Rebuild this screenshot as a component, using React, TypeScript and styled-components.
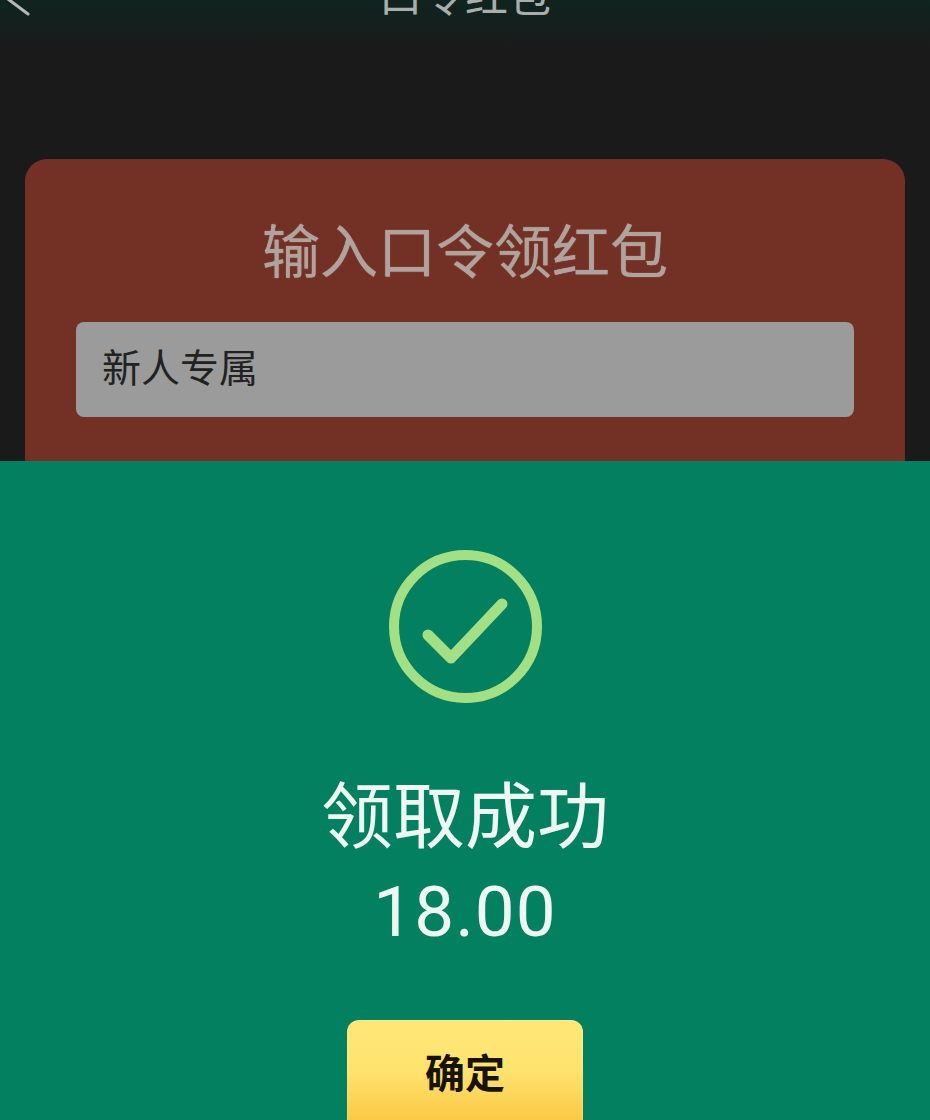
import React from 'react';
import styled, { createGlobalStyle } from 'styled-components';

const GlobalStyle = createGlobalStyle`
  html, body {
    margin: 0;
    padding: 0;
    background: #1a1a1a;
  }
  * {
    box-sizing: border-box;
  }
`;

const cjk = `"Noto Sans CJK SC", "Noto Sans", sans-serif`;

const Screen = styled.div`
  width: 930px;
  height: 1120px;
  overflow: hidden;
  display: flex;
  flex-direction: column;
  font-family: ${cjk};
`;

const Backdrop = styled.div`
  height: 461px;
  flex: none;
  overflow: hidden;
  background: #1a1a1a;
`;

const Header = styled.header`
  height: 100px;
  margin-top: -50px;
  padding-bottom: 14px;
  display: flex;
  align-items: center;
  justify-content: center;
  position: relative;
  background: linear-gradient(#0f2420 0%, #10231f 55%, #1a1a1a 100%);
`;

const BackIcon = styled.svg`
  position: absolute;
  left: 0;
  top: 50px;
  width: 40px;
  height: 40px;
`;

const HeaderTitle = styled.h1`
  margin: 0;
  font-size: 43px;
  line-height: 60px;
  font-weight: 400;
  color: #a9aeac;
`;

const Card = styled.section`
  margin: 109px 25px 0;
  height: 420px;
  padding: 56px 51px 0;
  border-radius: 22px;
  background: #733125;
`;

const CardTitle = styled.h2`
  margin: 0 0 41px;
  height: 66px;
  font-size: 58px;
  line-height: 66px;
  font-weight: 400;
  text-align: center;
  color: #b0a29d;
  text-shadow: 0 0 1px #b0a29d;
`;

const CodeField = styled.div`
  height: 95px;
  padding: 0 26px 10px;
  display: flex;
  align-items: center;
  border-radius: 8px;
  background: #9b9b9b;
  font-size: 39px;
  color: #222;
`;

const ResultSheet = styled.section`
  flex: 1;
  display: flex;
  flex-direction: column;
  align-items: center;
  padding-top: 88px;
  background: #038060;
`;

const SuccessIcon = styled.svg`
  width: 156px;
  height: 156px;
  flex: none;
`;

const ResultTitle = styled.div`
  margin-top: 54px;
  font-size: 72px;
  line-height: 104px;
  color: #eef7f2;
`;

const Amount = styled.div`
  margin-top: 1px;
  font-family: Roboto, "Noto Sans", sans-serif;
  font-size: 71px;
  line-height: 96px;
  letter-spacing: 1px;
  color: #eef7f2;
`;

const ConfirmButton = styled.button`
  margin-top: 60px;
  width: 236px;
  height: 116px;
  flex: none;
  display: flex;
  justify-content: center;
  padding: 21px 0 0;
  border: none;
  border-radius: 12px;
  background: linear-gradient(#ffe878 0%, #fee26e 45%, #fbc136 100%);
  box-shadow: inset 0 0 0 1px rgba(255, 255, 255, 0.15);
  font-family: ${cjk};
  font-size: 40px;
  line-height: 60px;
  font-weight: 700;
  color: #17130a;
`;

export default function App() {
  return (
    <Screen>
      <GlobalStyle />
      <Backdrop>
        <Header>
          <BackIcon viewBox="0 0 40 40" fill="none">
            <path d="M8 -1 L28 14" stroke="#b4b8b6" strokeWidth="3" strokeLinecap="round" />
          </BackIcon>
          <HeaderTitle>口令红包</HeaderTitle>
        </Header>
        <Card>
          <CardTitle>输入口令领红包</CardTitle>
          <CodeField>新人专属</CodeField>
        </Card>
      </Backdrop>
      <ResultSheet>
        <SuccessIcon viewBox="0 0 156 156" fill="none">
          <circle cx="78.5" cy="77.5" r="71.5" stroke="#a3e085" strokeWidth="10" />
          <path
            d="M41 86 L64 109 L115 55"
            stroke="#a3e085"
            strokeWidth="11"
            strokeLinecap="round"
            strokeLinejoin="round"
          />
        </SuccessIcon>
        <ResultTitle>领取成功</ResultTitle>
        <Amount>18.00</Amount>
        <ConfirmButton>确定</ConfirmButton>
      </ResultSheet>
    </Screen>
  );
}
